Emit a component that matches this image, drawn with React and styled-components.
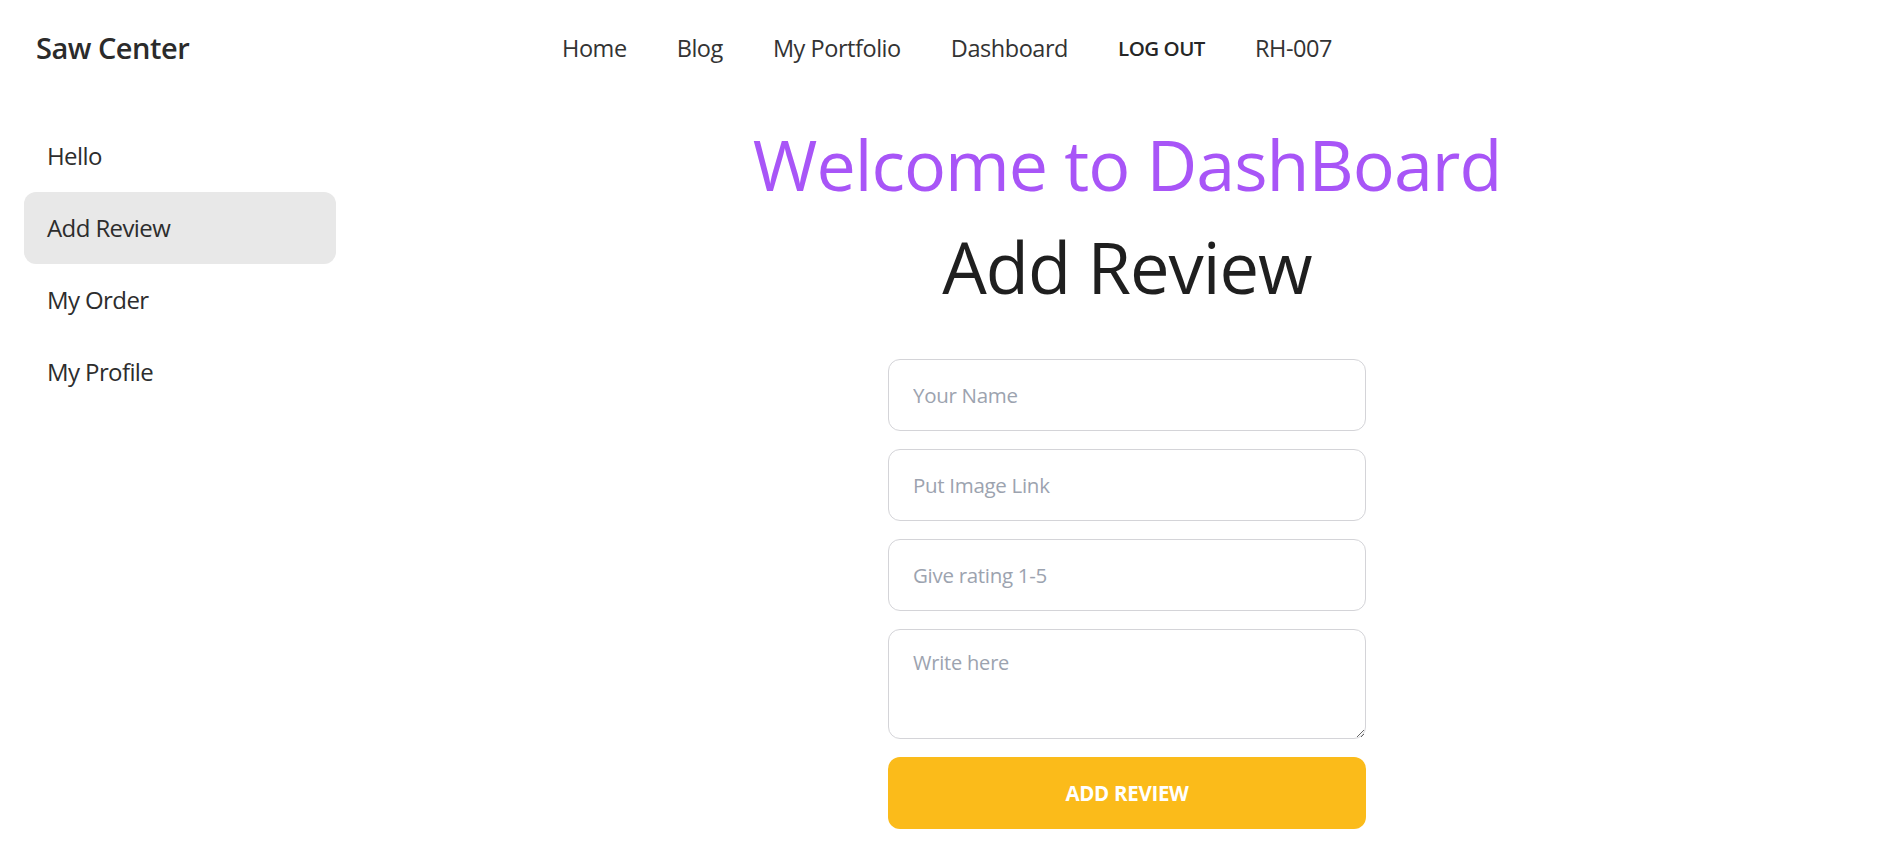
import React from "react";
import styled, { createGlobalStyle } from "styled-components";

const GlobalStyle = createGlobalStyle`
  html, body { margin: 0; padding: 0; background: #ffffff; }
  body {
    font-family: "Open Sans", "Noto Sans", sans-serif;
    color: #1f1f1f;
    -webkit-font-smoothing: antialiased;
  }
  *, *::before, *::after { box-sizing: border-box; }
  #root { min-height: 100vh; }
`;

const Page = styled.div`
  min-height: 100vh;
  display: flex;
  flex-direction: column;
`;

const Navbar = styled.header`
  display: flex;
  align-items: center;
  height: 96px;
  padding: 0 12px;
`;

const NavStart = styled.div`
  width: 50%;
  display: flex;
  justify-content: flex-start;
`;

const NavCenter = styled.nav`
  flex-shrink: 0;
  display: flex;
  align-items: center;
`;

const NavEnd = styled.div`
  width: 50%;
`;

const Brand = styled.a`
  padding: 0 24px;
  font-size: 29px;
  font-weight: 600;
  line-height: 72px;
  color: #2b2b2b;
  text-decoration: none;
  letter-spacing: -0.5px;
`;

const NavLink = styled.a`
  padding: 12px 25px;
  font-size: ${(p) => (p.$strong ? "20.5px" : "23.5px")};
  font-weight: ${(p) => (p.$strong ? 600 : 400)};
  line-height: 36px;
  color: ${(p) => (p.$strong ? "#262626" : "#333333")};
  text-decoration: none;
  white-space: nowrap;
  letter-spacing: ${(p) => (p.$strong ? "-0.5px" : "-0.45px")};
`;

const Body = styled.div`
  display: flex;
  flex: 1;
`;

const Sidebar = styled.aside`
  width: 360px;
  flex-shrink: 0;
  padding: 24px;
  display: flex;
  flex-direction: column;
`;

const SideLink = styled.a`
  display: block;
  padding: 18px 23px;
  font-size: 24px;
  line-height: 36px;
  border-radius: 12px;
  color: #2d2d2d;
  text-decoration: none;
  letter-spacing: -0.6px;
  background: ${(p) => (p.$active ? "#e8e8e8" : "transparent")};
`;

const Main = styled.main`
  flex: 1;
  display: flex;
  flex-direction: column;
  align-items: center;
  padding-top: 32px;
`;

const Welcome = styled.h1`
  margin: 0;
  font-size: 70px;
  line-height: 72px;
  font-weight: 400;
  color: #a855f7;
  letter-spacing: -1px;
`;

const Title = styled.h2`
  margin: 31px 0 0;
  font-size: 70.5px;
  line-height: 72px;
  font-weight: 400;
  color: #1f1f1f;
  letter-spacing: -1px;
`;

const Form = styled.form`
  width: 478px;
  margin-top: 56px;
  display: flex;
  flex-direction: column;
  gap: 18px;
`;

const Input = styled.input`
  height: 72px;
  padding: 0 24px;
  border: 1px solid #d4d4d8;
  border-radius: 12px;
  font-family: inherit;
  font-size: 20.5px;
  letter-spacing: -0.3px;
  color: #1f1f1f;
  background: #fff;
  outline: none;
  &::placeholder { color: #9ca3af; }
`;

const TextArea = styled.textarea`
  height: 110px;
  padding: 12px 24px;
  border: 1px solid #d4d4d8;
  border-radius: 12px;
  font-family: inherit;
  font-size: 20px;
  line-height: 42px;
  letter-spacing: -0.2px;
  color: #1f1f1f;
  background: #fff;
  outline: none;
  &::placeholder { color: #9ca3af; }
`;

const SubmitButton = styled.button`
  height: 72px;
  border: none;
  border-radius: 12px;
  background: #fbbb1a;
  color: #ffffff;
  font-family: inherit;
  font-size: 20.5px;
  font-weight: 700;
  text-transform: uppercase;
  letter-spacing: -0.3px;
  cursor: pointer;
`;

const navItems = ["Home", "Blog", "My Portfolio", "Dashboard"];
const sideItems = ["Hello", "Add Review", "My Order", "My Profile"];

export default function App() {
  return (
    <Page>
      <GlobalStyle />
      <Navbar>
        <NavStart>
          <Brand href="#">Saw Center</Brand>
        </NavStart>
        <NavCenter>
          {navItems.map((item) => (
            <NavLink key={item} href="#">{item}</NavLink>
          ))}
          <NavLink href="#" $strong>LOG OUT</NavLink>
          <NavLink href="#">RH-007</NavLink>
        </NavCenter>
        <NavEnd />
      </Navbar>
      <Body>
        <Sidebar>
          {sideItems.map((item) => (
            <SideLink key={item} href="#" $active={item === "Add Review"}>
              {item}
            </SideLink>
          ))}
        </Sidebar>
        <Main>
          <Welcome>Welcome to DashBoard</Welcome>
          <Title>Add Review</Title>
          <Form onSubmit={(e) => e.preventDefault()}>
            <Input type="text" placeholder="Your Name" />
            <Input type="text" placeholder="Put Image Link" />
            <Input type="text" placeholder="Give rating 1-5" />
            <TextArea placeholder="Write here" />
            <SubmitButton type="submit">Add Review</SubmitButton>
          </Form>
        </Main>
      </Body>
    </Page>
  );
}
